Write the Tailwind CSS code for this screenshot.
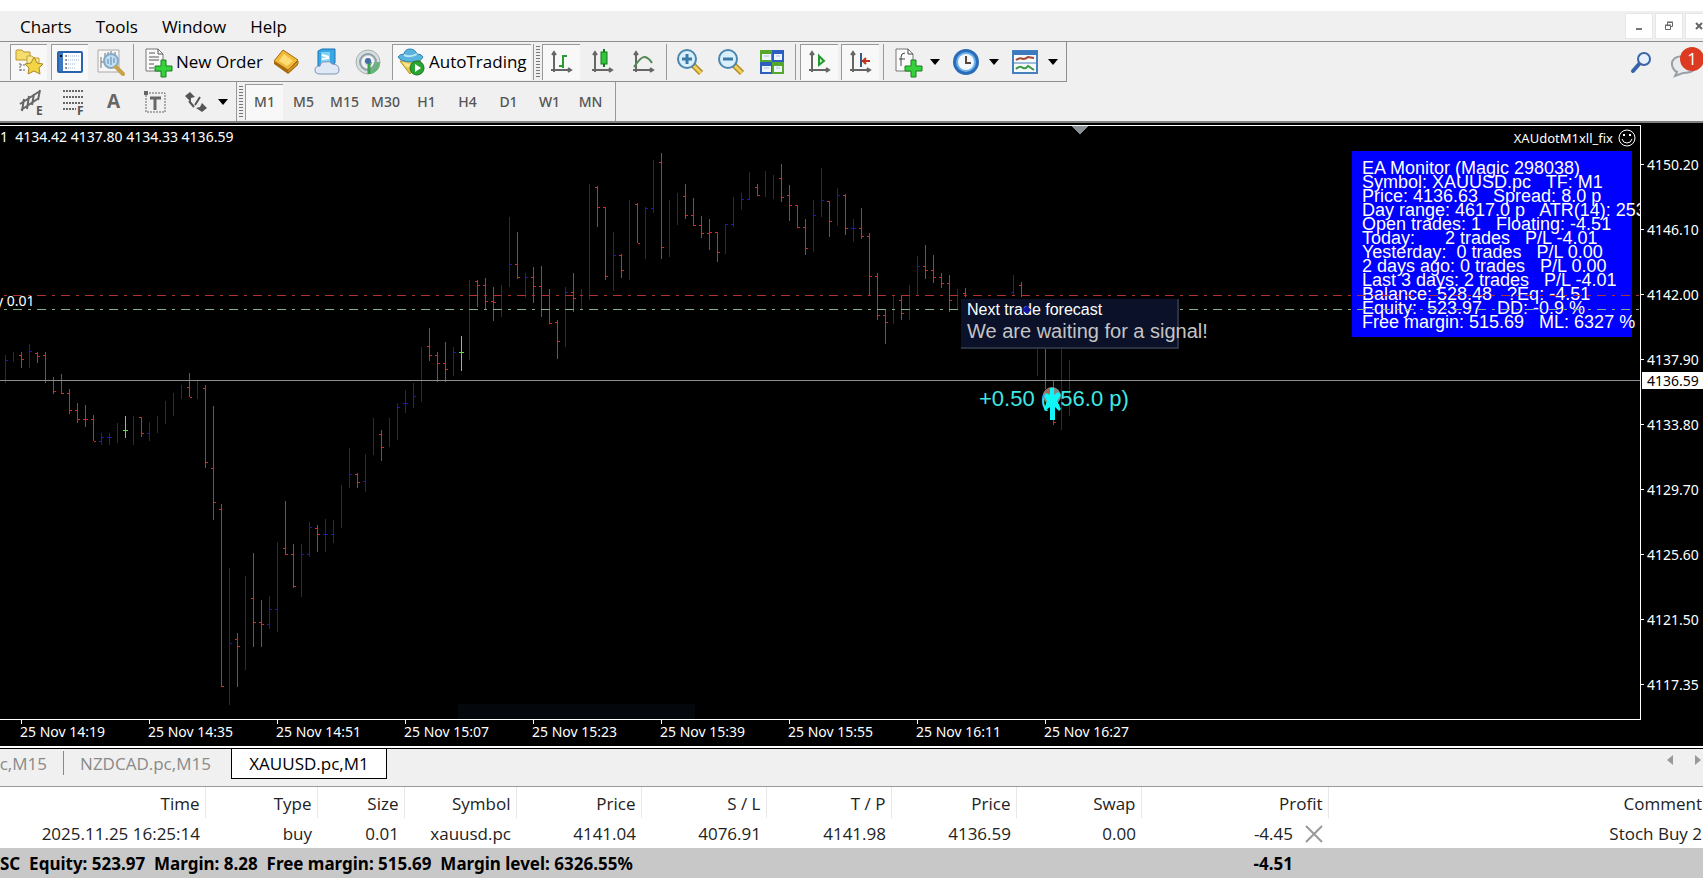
<!DOCTYPE html>
<html lang="en">
   <head>
      <meta charset="UTF-8" />
      <meta name="viewport" content="width=device-width, initial-scale=1.0" />
      <script src="https://cdn.jsdelivr.net/npm/@tailwindcss/browser@4"></script>
      <title>XAUUSD.pc,M1</title>
   </head>

   <body
      class="h-screen flex flex-col overflow-hidden bg-white text-black pt-[11px] pb-3 text-[17px] font-['Open_Sans',sans-serif]"
   >
      <!-- Menu bar -->
      <header
         class="h-[31px] shrink-0 flex items-center justify-between bg-[#f0f0f0] border-b border-[#8c8f8f]"
      >
         <nav class="flex items-center gap-6 pl-5 pt-[2px] leading-6">
            <a href="#">Charts</a>
            <a href="#">Tools</a>
            <a href="#">Window</a>
            <a href="#">Help</a>
         </nav>
         <div class="flex h-[26px] gap-[2px] text-gray-600">
            <button aria-label="Minimize" class="w-7 bg-white border border-gray-200 flex items-center justify-center">
               <svg class="size-3" viewBox="0 0 12 12"><path d="M3 9h6" stroke="#777" stroke-width="2" /></svg>
            </button>
            <button aria-label="Restore" class="w-7 bg-white border border-gray-200 flex items-center justify-center">
               <svg class="size-3" viewBox="0 0 12 12" fill="none" stroke="#666"><path d="M2.500 5.500h5v4h-5zM4.500 5V2.500h5v4H8M2 5h6M4 2h6" /></svg>
            </button>
            <button aria-label="Close" class="w-[18px] bg-white border border-r-0 border-gray-200 flex items-center justify-end overflow-hidden">
               <svg class="size-2 shrink-0" viewBox="0 0 8 8"><path d="M1 1l6 6M7 1l-6 6" stroke="#666" stroke-width="2" /></svg>
            </button>
         </div>
      </header>

      <!-- Main toolbar -->
      <div class="h-10 shrink-0 flex items-center justify-between bg-[#f0f0f0]">
         <div class="h-full flex items-center pl-[10px] border-r border-b border-[#8c8f8f] pr-2">
            <div class="flex items-center gap-1">
               <button aria-label="Favorites" class="w-[37px] h-9 flex items-center justify-center bg-[#f8f8f8] border-l border-t border-[#999]">
                  <svg class="size-7" viewBox="0 0 28 28">
                     <path d="M1 3q0-1 1-1h5l2 2h6v8H1z" fill="#f6dc6c" stroke="#b8962c" />
                     <path d="M5 15v9M5 17h6M5 22h6" stroke="#666" stroke-dasharray="2 1" />
                     <path d="M12 8h5l2 2h5v7H12z" fill="#fae98c" stroke="#c3a038" />
                     <path d="M19 9l3 6 6 1-4 4 1 6-6-3-6 3 1-6-4-4 6-1z" fill="#f3d443" stroke="#a88a2a" />
                  </svg>
               </button>
               <button aria-label="Terminal" class="w-[37px] h-9 flex items-center justify-center bg-[#f8f8f8] border-l border-t border-[#999]">
                  <svg class="size-7" viewBox="0 0 28 28">
                     <rect x="2" y="4" width="24" height="20" rx="1" fill="#fff" stroke="#2b64ae" stroke-width="2" />
                     <path d="M3 5h4v18H3z" fill="#3c78c4" />
                     <path d="M5 7v2" stroke="#111" stroke-width="2" />
                     <path d="M10 8h14M10 12h14M10 16h10M10 20h10" stroke="#9db4d8" stroke-dasharray="1 1" />
                     <path d="M9 8h2M9 12h2M9 16h2M9 20h2" stroke="#444" stroke-width="1" />
                  </svg>
               </button>
               <button aria-label="Strategy tester" class="w-[37px] h-9 flex items-center justify-center">
                  <svg class="size-7" viewBox="0 0 28 28">
                     <path d="M1 2h21v22H1z" fill="#f6f6f6" stroke="#aaa" />
                     <path d="M4 20V9M4 14h3M8 17V5M11 8V4M14 9V3M18 8V4" stroke="#777" />
                     <circle cx="14" cy="13" r="7" fill="#b9dcf3" fill-opacity=".85" stroke="#86a9c6" stroke-width="2" />
                     <path d="M11 16v-5M14 17v-8M17 15v-5" stroke="#5b87b0" />
                     <path d="M19 19l7 7" stroke="#c8a24a" stroke-width="4" stroke-linecap="round" />
                  </svg>
               </button>
            </div>
            <div class="w-px h-9 mx-1 bg-[#999]"></div>
            <button class="h-9 flex items-center gap-[2px] px-1">
               <svg class="size-8" viewBox="0 0 32 32">
                  <path d="M4 3h12l5 5v17H4z" fill="#fafafa" stroke="#777" />
                  <path d="M16 3v5h5M7 7h6M7 11h10M7 14h10M7 18h5M7 22h5" fill="none" stroke="#555" />
                  <path d="M19 14h5v6h6v5h-6v6h-5v-6h-6v-5h6z" fill="#35d13a" stroke="#16801c" />
               </svg>
               New Order
            </button>
            <div class="flex items-center gap-1">
               <button aria-label="MetaEditor" class="w-[37px] h-9 flex items-center justify-center">
                  <svg class="size-7" viewBox="0 0 28 28">
                     <path d="M2 13L11 2l15 10v5L16 26 2 16z" fill="#a86a10" />
                     <path d="M2 13L11 2l15 10-10 10z" fill="#f0b93a" stroke="#a96f14" />
                     <path d="M7 13l5-7 9 7-6 5z" fill="#ffdc74" />
                     <path d="M16 22l10-9v3l-10 9z" fill="#d99a2a" stroke="#a96f14" />
                  </svg>
               </button>
               <button aria-label="Virtual hosting" class="w-[37px] h-9 flex items-center justify-center">
                  <svg class="size-7" viewBox="0 0 28 28">
                     <path d="M5 3l4-2h13v14l-4 3H5z" fill="#3aa7e4" stroke="#1b75b8" />
                     <path d="M8 4h9v12H8z" fill="#7fd2fa" />
                     <path d="M9 7l7 2M9 11l7-1" stroke="#fff" stroke-width="2" />
                     <path d="M7 26q-5 0-5-4t5-4q1-5 6-4 3-2 6 2 7 0 7 6 0 4-5 4z" fill="#dfe8f5" stroke="#7f93b5" />
                  </svg>
               </button>
               <button aria-label="Signals" class="w-[37px] h-9 flex items-center justify-center">
                  <svg class="size-7" viewBox="0 0 28 28" fill="none">
                     <circle cx="14" cy="14" r="12" fill="#d8dedd" stroke="#a5b1b3" />
                     <path d="M14 14L26 14q0 10-10 12h-2z" fill="#62b871" />
                     <circle cx="14" cy="14" r="8" stroke="#8da0aa" stroke-width="2" />
                     <circle cx="14" cy="14" r="5" stroke="#f5f7f8" stroke-width="2" />
                     <circle cx="14" cy="13" r="3" fill="#3f6ca6" />
                     <path d="M15 16v10" stroke="#3fa14f" stroke-width="3" />
                  </svg>
               </button>
            </div>
            <button class="h-9 ml-[6px] pl-1 pr-1 flex items-center gap-1 bg-[#f8f8f8] border-l border-t border-[#999]">
               <svg class="size-7" viewBox="0 0 28 28">
                  <path d="M3 13h21L13 26z" fill="#ecc94e" stroke="#b18f26" />
                  <path d="M5 13q8 6 18 0l-2 5q-7 3-13 0z" fill="#fae68d" />
                  <path d="M1 9q2-3 6-3 1-5 6-5t7 5q5 0 6 3-2 5-12 5T1 9z" fill="#58b4dc" stroke="#2f86b4" />
                  <path d="M7 7q6 3 13-1" fill="none" stroke="#b7e5f7" stroke-width="2" />
                  <circle cx="20" cy="20" r="7" fill="#28a532" stroke="#15771d" />
                  <path d="M18 16l6 4-6 4z" fill="#fff" />
               </svg>
               AutoTrading
            </button>
            <div class="w-px h-9 mx-[2px] bg-[#999]"></div>
            <svg class="w-1 h-8 mr-[2px]"><path d="M2 0v32" stroke="#777" stroke-width="4" stroke-dasharray="1 2" /></svg>
            <div class="flex items-center gap-[3px]">
               <button aria-label="Bar chart" class="w-[38px] h-9 flex items-center justify-center bg-[#f8f8f8] border-l border-t border-[#999]">
                  <svg class="size-6" viewBox="0 0 24 24" fill="none" stroke="#666" stroke-width="2">
                     <path d="M5 3v19M2 20h19M3 5l2-3 2 3M19 18l3 2-3 2" />
                     <path d="M14 5v13M14 6h4M10 16h4" stroke="#2a9a34" />
                  </svg>
               </button>
               <button aria-label="Candlesticks" class="w-[38px] h-9 flex items-center justify-center">
                  <svg class="size-6 overflow-visible" viewBox="0 0 24 24" fill="none" stroke="#666" stroke-width="2">
                     <path d="M5 3v19M2 20h19M3 5l2-3 2 3M19 18l3 2-3 2" />
                     <path d="M14-1v18" stroke="#137a1d" />
                     <rect x="11" y="2" width="6" height="12" fill="#31c43c" stroke="#137a1d" stroke-width="1" />
                  </svg>
               </button>
               <button aria-label="Line chart" class="w-[38px] h-9 flex items-center justify-center">
                  <svg class="size-6" viewBox="0 0 24 24" fill="none" stroke="#666" stroke-width="2">
                     <path d="M5 3v19M2 20h19M3 5l2-3 2 3M19 18l3 2-3 2" />
                     <path d="M3 17q7-11 11-10 4 1 7 6" stroke="#54895a" />
                  </svg>
               </button>
            </div>
            <div class="w-px h-9 mx-1 bg-[#999]"></div>
            <div class="flex items-center gap-[3px]">
               <button aria-label="Zoom in" class="w-[38px] h-9 flex items-center justify-center">
                  <svg class="size-7" viewBox="0 0 28 28">
                     <path d="M17 17l8 8" stroke="#b08a28" stroke-width="6" />
                     <path d="M17 17l8 8" stroke="#f0d05c" stroke-width="3" />
                     <circle cx="11" cy="11" r="9" fill="#d9effb" stroke="#4a86ad" stroke-width="2" />
                     <path d="M6 11h10M11 6v10" stroke="#3b7ba8" stroke-width="3" />
                  </svg>
               </button>
               <button aria-label="Zoom out" class="w-[38px] h-9 flex items-center justify-center">
                  <svg class="size-7" viewBox="0 0 28 28">
                     <path d="M17 17l8 8" stroke="#b08a28" stroke-width="6" />
                     <path d="M17 17l8 8" stroke="#f0d05c" stroke-width="3" />
                     <circle cx="11" cy="11" r="9" fill="#d9effb" stroke="#4a86ad" stroke-width="2" />
                     <path d="M6 11h10" stroke="#3b7ba8" stroke-width="3" />
                  </svg>
               </button>
               <button aria-label="Tile windows" class="w-[38px] h-9 flex items-center justify-center">
                  <svg class="size-7" viewBox="0 0 28 28">
                     <path d="M2 2h12v12H2zM14 14h12v12H14z" fill="#56a82d" />
                     <path d="M14 2h12v12H14zM2 14h12v12H2z" fill="#2c5fc0" />
                     <path d="M4 6h9v6H4zM16 6h8v6h-8zM4 18h9v6H4zM16 18h8v6h-8z" fill="#eef4fb" />
                     <path d="M6 8h5M18 8h4M6 20h5M18 20h4" stroke="#a9c3dd" />
                  </svg>
               </button>
            </div>
            <div class="w-px h-9 mx-1 bg-[#999]"></div>
            <div class="flex items-center gap-[3px]">
               <button aria-label="Auto scroll" class="w-[38px] h-9 flex items-center justify-center bg-[#f8f8f8] border-l border-t border-[#999]">
                  <svg class="size-6" viewBox="0 0 24 24" fill="none" stroke="#666" stroke-width="2">
                     <path d="M5 3v19M2 20h19M3 5l2-3 2 3M19 18l3 2-3 2" />
                     <path d="M12 6l5 5-5 4z" fill="#c9f0cb" stroke="#239a2f" />
                  </svg>
               </button>
               <button aria-label="Chart shift" class="w-[38px] h-9 flex items-center justify-center bg-[#f8f8f8] border-l border-t border-[#999]">
                  <svg class="size-6" viewBox="0 0 24 24" fill="none" stroke="#666" stroke-width="2">
                     <path d="M5 3v19M2 20h19M3 5l2-3 2 3M19 18l3 2-3 2" />
                     <path d="M13 3v14" stroke="#2d5d85" />
                     <path d="M14 11h8M18 8l-3 3 3 3" stroke="#c0301c" />
                  </svg>
               </button>
            </div>
            <div class="w-px h-9 mx-1 bg-[#999]"></div>
            <div class="flex items-center gap-3 pl-1">
               <button aria-label="Indicators" class="h-9 flex items-center gap-[6px]">
                  <svg class="size-8" viewBox="0 0 32 32">
                     <path d="M4 3h12l5 5v17H4z" fill="#fafafa" stroke="#777" />
                     <path d="M16 3v5h5M13 7q-4 0-4 4v9M7 13h6" fill="none" stroke="#444" stroke-width="1" />
                     <path d="M19 14h5v6h6v5h-6v6h-5v-6h-6v-5h6z" fill="#35d13a" stroke="#16801c" />
                  </svg>
                  <svg class="w-[10px] h-[6px]" viewBox="0 0 10 6"><path d="M0 0h10L5 6z" /></svg>
               </button>
               <button aria-label="Periods" class="h-9 flex items-center gap-[9px]">
                  <svg class="size-7" viewBox="0 0 28 28">
                     <circle cx="14" cy="14" r="13" fill="#2a6cb8" />
                     <circle cx="14" cy="14" r="10" fill="#6db2ea" />
                     <circle cx="14" cy="14" r="8" fill="#f4f8fb" />
                     <path d="M14 8v7h5" fill="none" stroke="#5a4638" stroke-width="2" />
                  </svg>
                  <svg class="w-[10px] h-[6px]" viewBox="0 0 10 6"><path d="M0 0h10L5 6z" /></svg>
               </button>
               <button aria-label="Templates" class="h-9 flex items-center gap-[9px]">
                  <svg class="size-7" viewBox="0 0 28 28" fill="none">
                     <rect x="2" y="3" width="24" height="22" fill="#f6fafd" stroke="#4680bd" stroke-width="2" />
                     <path d="M2 5h24" stroke="#3c7ac0" stroke-width="4" />
                     <path d="M2 15h24" stroke="#4680bd" />
                     <path d="M5 12q4-3 7-1 3 0 5-2l6 1" stroke="#a5452c" stroke-width="2" />
                     <path d="M5 21q4-4 7-1 3 1 5-2l6 4" stroke="#3c9a45" stroke-width="2" />
                  </svg>
                  <svg class="w-[10px] h-[6px]" viewBox="0 0 10 6"><path d="M0 0h10L5 6z" /></svg>
               </button>
            </div>
         </div>
         <div class="flex items-center gap-4">
            <button aria-label="Search">
               <svg class="size-6" viewBox="0 0 24 24">
                  <path d="M11 13l-7 8" stroke="#3764a8" stroke-width="4" stroke-linecap="round" />
                  <circle cx="15" cy="9" r="6" fill="#e6f0fa" stroke="#3c62a8" stroke-width="2" />
               </svg>
            </button>
            <button aria-label="Notifications">
               <svg class="w-[34px] h-9" viewBox="0 0 34 36">
                  <path d="M14 12q-12 1-11 9 1 5 5 7l-2 4 8-3q8 0 12-4" fill="#e8eaee" stroke="#9aa0a8" stroke-width="2" />
                  <circle cx="23" cy="15" r="12" fill="#dd3a22" />
                  <text x="23" y="21" text-anchor="middle" font-size="17" fill="#fff">1</text>
               </svg>
            </button>
         </div>
      </div>

      <!-- Line studies and timeframes -->
      <div class="h-[41px] shrink-0 flex items-center bg-[#f0f0f0] border-b-2 border-[#808080]">
         <div class="h-full flex items-center pl-3 border-r border-[#999]">
            <button aria-label="Equidistant channel" class="w-10 h-9 flex items-center justify-center">
               <svg class="size-7 overflow-visible" viewBox="0 0 28 28" stroke="#666" stroke-width="2" fill="none">
                  <path d="M2 16L22 3M3 22L21 10M6 11l-2 12M11 8l-2 13M16 6l-2 11M22 2l-2 10" />
                  <text x="18" y="27" font-size="12" font-weight="700" fill="#555" stroke="none">E</text>
               </svg>
            </button>
            <button aria-label="Fibonacci retracement" class="w-[41px] h-9 flex items-center justify-center">
               <svg class="size-7 overflow-visible" viewBox="0 0 28 28" stroke="#666" stroke-width="2" fill="none">
                  <path d="M4 3h21M4 9h21M4 15h21M4 21h13" stroke-dasharray="2 1" />
                  <text x="18" y="27" font-size="12" font-weight="700" fill="#555" stroke="none">F</text>
               </svg>
            </button>
            <button class="w-[41px] h-9 text-[19px] font-bold text-[#666]">A</button>
            <button aria-label="Text label" class="w-[41px] h-9 flex items-center justify-center">
               <svg class="size-7" viewBox="0 0 28 28" stroke="#666" fill="none">
                  <rect x="5" y="5" width="19" height="19" stroke-dasharray="2 1" />
                  <path d="M3 3h4v4H3z" fill="#666" stroke="none" />
                  <path d="M9 10h11M14 10v12" stroke-width="3" />
               </svg>
            </button>
            <button aria-label="Arrows" class="w-[61px] h-9 flex items-center justify-center gap-[10px]">
               <svg class="size-6" viewBox="0 0 24 24" fill="#555">
                  <path d="M6 2l5 5-4 1v4L1 6zM18 13l5 5-5 4-6-4 4-1z" />
                  <path d="M5 11l5 6M11 15l5-8" stroke="#555" stroke-width="2" />
               </svg>
               <svg class="w-[10px] h-[6px]" viewBox="0 0 10 6"><path d="M0 0h10L5 6z" fill="#000" /></svg>
            </button>
         </div>
         <svg class="w-1 h-8 mx-[2px]"><path d="M2 0v32" stroke="#777" stroke-width="4" stroke-dasharray="1 2" /></svg>
         <div class="h-full flex items-center pr-1 border-r border-[#999] text-sm font-medium text-[#555] font-['Noto_Sans',sans-serif]">
            <button class="w-[38px] h-9 bg-[#f8f8f8] border-l border-t border-[#999]">M1</button>
            <button class="w-[41px] h-9">M5</button>
            <button class="w-[41px] h-9">M15</button>
            <button class="w-[41px] h-9">M30</button>
            <button class="w-[41px] h-9">H1</button>
            <button class="w-[41px] h-9">H4</button>
            <button class="w-[41px] h-9">D1</button>
            <button class="w-[41px] h-9">W1</button>
            <button class="w-[41px] h-9">MN</button>
         </div>
      </div>

      <!-- Chart -->
      <main class="flex-1 min-h-0 flex flex-col bg-black pt-[2px] text-white text-sm font-['Noto_Sans',sans-serif]">
         <div class="flex-1 min-h-0 flex">
            <div class="relative flex-1 min-w-0 overflow-hidden border-t border-r border-b border-white">
               <svg class="absolute inset-0 size-full">
                  <rect x="458" y="578" width="237" height="16" fill="#04080c" />
                  <g id="bars" fill="none"></g>
               </svg>

               <!-- EA monitor panel -->
               <div class="absolute top-[25px] right-2 w-[280px] h-[186px] flex flex-col pt-[10px] pl-[10px] bg-[#0000fe] text-lg leading-[14px] whitespace-pre font-['Liberation_Sans',sans-serif]">
                  <p>EA Monitor (Magic 298038)</p>
                  <p>Symbol: XAUUSD.pc   TF: M1</p>
                  <p>Price: 4136.63   Spread: 8.0 p</p>
                  <p>Day range: 4617.0 p   ATR(14): 253</p>
                  <p>Open trades: 1   Floating: -4.51</p>
                  <p>Today:      2 trades   P/L -4.01</p>
                  <p>Yesterday:  0 trades   P/L 0.00</p>
                  <p>2 days ago: 0 trades   P/L 0.00</p>
                  <p>Last 3 days: 2 trades   P/L -4.01</p>
                  <p>Balance: 528.48   ?Eq: -4.51</p>
                  <p>Equity:  523.97   DD: -0.9 %</p>
                  <p>Free margin: 515.69   ML: 6327 %</p>
               </div>

               <!-- Price level lines -->
               <svg class="absolute inset-0 size-full" shape-rendering="crispEdges">
                  <line x1="-11" y1="169.500" x2="100%" y2="169.500" stroke="#b03232" stroke-dasharray="9 6 3 6" />
                  <line x1="-11" y1="183.500" x2="100%" y2="183.500" stroke="#84b08c" stroke-dasharray="9 6 3 6" />
                  <line x1="0" y1="254.500" x2="100%" y2="254.500" stroke="#8c8f94" />
                  <path d="M1071 0h17l-8 9z" fill="#8a8f96" />
               </svg>

               <p class="absolute top-px left-0 leading-5 whitespace-pre">1  4134.42 4137.80 4134.33 4136.59</p>
               <p class="absolute top-[165px] left-[-4px] leading-5">y 0.01</p>
               <div class="absolute top-[2px] right-1 flex items-center gap-[5px] text-[13px] leading-5">
                  XAUdotM1xll_fix
                  <svg class="size-[18px]" viewBox="0 0 18 18" fill="none" stroke="#fff">
                     <circle cx="9" cy="9" r="8" />
                     <path d="M4 10q1 4 5 4t5-4" />
                     <path d="M6 5v2M12 5v2" stroke-width="2" />
                  </svg>
               </div>

               <!-- Open trade result -->
               <p class="absolute top-[261px] left-[979px] leading-6 text-[22px] text-[#3fe8e4] whitespace-nowrap font-['Liberation_Sans',sans-serif]">+0.50 (156.0 p)</p>
               <svg class="absolute top-[260px] left-[1040px] w-6 h-9" viewBox="0 0 24 36">
                  <circle cx="12" cy="10" r="9" fill="#7d8a88" />
                  <path d="M5 5l4-3 2 3-4 4z" fill="#b0664c" />
                  <path d="M10 2h4v7l4-3 3 3-4 6 4 8-2 2-4-4v13h-5V21l-5 4-1-2 3-8-3-5 2-3 4 2z" fill="#0ff6f6" />
               </svg>

               <!-- Forecast -->
               <div class="absolute top-[173px] left-[961px] w-[218px] h-[50px] pl-[6px] pt-[1px] bg-[#0a1128] border-b-2 border-r-2 border-[#2b3243] whitespace-nowrap font-['Liberation_Sans',sans-serif]">
                  <p class="text-base leading-5">Next trade forecast</p>
                  <p class="text-xl leading-[22px] text-[#c4c4c4]">We are waiting for a signal!</p>
               </div>
               <svg class="absolute top-[179px] left-[1022px] size-[9px]" viewBox="0 0 9 9"><path d="M5 0l4 5-4 4-5-4z" fill="#1414a8" /></svg>
            </div>

            <!-- Price scale -->
            <div class="relative w-[62px] pt-[7px]">
               <div class="h-[65px] flex items-center gap-[3px]"><i class="w-[3px] h-px bg-white"></i>4150.20</div>
               <div class="h-[65px] flex items-center gap-[3px]"><i class="w-[3px] h-px bg-white"></i>4146.10</div>
               <div class="h-[65px] flex items-center gap-[3px]"><i class="w-[3px] h-px bg-white"></i>4142.00</div>
               <div class="h-[65px] flex items-center gap-[3px]"><i class="w-[3px] h-px bg-white"></i>4137.90</div>
               <div class="h-[65px] flex items-center gap-[3px]"><i class="w-[3px] h-px bg-white"></i>4133.80</div>
               <div class="h-[65px] flex items-center gap-[3px]"><i class="w-[3px] h-px bg-white"></i>4129.70</div>
               <div class="h-[65px] flex items-center gap-[3px]"><i class="w-[3px] h-px bg-white"></i>4125.60</div>
               <div class="h-[65px] flex items-center gap-[3px]"><i class="w-[3px] h-px bg-white"></i>4121.50</div>
               <div class="h-[65px] flex items-center gap-[3px]"><i class="w-[3px] h-px bg-white"></i>4117.35</div>
               <div class="absolute top-[247px] left-px right-0 h-[17px] pl-[5px] bg-white text-black leading-[17px]">4136.59</div>
            </div>
         </div>

         <!-- Time scale -->
         <div class="h-[26px] flex pl-[21px]">
            <div class="w-32 h-1 border-l border-white whitespace-nowrap leading-6 -indent-[2px]">25 Nov 14:19</div>
            <div class="w-32 h-1 border-l border-white whitespace-nowrap leading-6 -indent-[2px]">25 Nov 14:35</div>
            <div class="w-32 h-1 border-l border-white whitespace-nowrap leading-6 -indent-[2px]">25 Nov 14:51</div>
            <div class="w-32 h-1 border-l border-white whitespace-nowrap leading-6 -indent-[2px]">25 Nov 15:07</div>
            <div class="w-32 h-1 border-l border-white whitespace-nowrap leading-6 -indent-[2px]">25 Nov 15:23</div>
            <div class="w-32 h-1 border-l border-white whitespace-nowrap leading-6 -indent-[2px]">25 Nov 15:39</div>
            <div class="w-32 h-1 border-l border-white whitespace-nowrap leading-6 -indent-[2px]">25 Nov 15:55</div>
            <div class="w-32 h-1 border-l border-white whitespace-nowrap leading-6 -indent-[2px]">25 Nov 16:11</div>
            <div class="w-32 h-1 border-l border-white whitespace-nowrap leading-6 -indent-[2px]">25 Nov 16:27</div>
         </div>
      </main>

      <!-- Chart tabs -->
      <div class="shrink-0 mt-[2px] h-[39px] flex items-start justify-between bg-[#f0f0f0] border-t border-b border-t-black border-b-[#999]">
         <div class="flex text-[#8a8a8a]">
            <button class="h-[30px] w-[63px] flex items-center justify-end pr-4">c,M15</button>
            <div class="w-px h-6 mt-[2px] bg-[#888]"></div>
            <button class="h-[30px] w-[167px] text-center pr-1">NZDCAD.pc,M15</button>
            <button class="h-[30px] w-[156px] bg-white text-black border-x border-b border-black">XAUUSD.pc,M1</button>
         </div>
         <div class="flex gap-[22px] pt-[6px] pr-[2px]">
            <button aria-label="Previous"><svg class="w-[6px] h-[10px]" viewBox="0 0 6 10"><path d="M6 0v10L0 5z" fill="#999" /></svg></button>
            <button aria-label="Next"><svg class="w-[6px] h-[10px]" viewBox="0 0 6 10"><path d="M0 0v10l6-5z" fill="#999" /></svg></button>
         </div>
      </div>

      <!-- Trades -->
      <table class="shrink-0 w-full table-fixed text-right whitespace-nowrap leading-7 text-[#222]">
         <colgroup>
            <col class="w-[205px]" />
            <col class="w-[112px]" />
            <col class="w-[87px]" />
            <col class="w-[112px]" />
            <col class="w-[125px]" />
            <col class="w-[125px]" />
            <col class="w-[125px]" />
            <col class="w-[125px]" />
            <col class="w-[125px]" />
            <col class="w-[187px]" />
            <col />
         </colgroup>
         <thead>
            <tr class="h-[31px]">
               <th class="font-normal p-0 pt-[2px] pr-[5px] border-r border-[#e8e8e8]">Time</th>
               <th class="font-normal p-0 pt-[2px] pr-[5px] border-r border-[#e8e8e8]">Type</th>
               <th class="font-normal p-0 pt-[2px] pr-[5px] border-r border-[#e8e8e8]">Size</th>
               <th class="font-normal p-0 pt-[2px] pr-[5px] border-r border-[#e8e8e8]">Symbol</th>
               <th class="font-normal p-0 pt-[2px] pr-[5px] border-r border-[#e8e8e8]">Price</th>
               <th class="font-normal p-0 pt-[2px] pr-[5px] border-r border-[#e8e8e8]">S / L</th>
               <th class="font-normal p-0 pt-[2px] pr-[5px] border-r border-[#e8e8e8]">T / P</th>
               <th class="font-normal p-0 pt-[2px] pr-[5px] border-r border-[#e8e8e8]">Price</th>
               <th class="font-normal p-0 pt-[2px] pr-[5px] border-r border-[#e8e8e8]">Swap</th>
               <th class="font-normal p-0 pt-[2px] pr-[5px] border-r border-[#e8e8e8]">Profit</th>
               <th class="font-normal p-0 pt-[2px] pr-px">Comment</th>
            </tr>
         </thead>
         <tbody>
            <tr>
               <td class="p-0 pt-[2px] pr-[5px]">2025.11.25 16:25:14</td>
               <td class="p-0 pt-[2px] pr-[5px]">buy</td>
               <td class="p-0 pt-[2px] pr-[5px]">0.01</td>
               <td class="p-0 pt-[2px] pr-[5px]">xauusd.pc</td>
               <td class="p-0 pt-[2px] pr-[5px]">4141.04</td>
               <td class="p-0 pt-[2px] pr-[5px]">4076.91</td>
               <td class="p-0 pt-[2px] pr-[5px]">4141.98</td>
               <td class="p-0 pt-[2px] pr-[5px]">4136.59</td>
               <td class="p-0 pt-[2px] pr-[5px]">0.00</td>
               <td class="p-0 pt-[2px] pr-[5px]">
                  <div class="flex items-center justify-end gap-3">
                     -4.45
                     <button aria-label="Close position">
                        <svg class="size-[18px]" viewBox="0 0 18 18"><path d="M1 1l16 16M17 1L1 17" stroke="#999" stroke-width="2" /></svg>
                     </button>
                  </div>
               </td>
               <td class="p-0 pt-[2px] pr-px">Stoch Buy 2</td>
            </tr>
         </tbody>
         <tfoot>
            <tr class="bg-[#c8c8c8] font-bold text-black font-['Noto_Sans',sans-serif]">
               <td colspan="9" class="p-0 pt-[2px] text-left whitespace-pre">SC  Equity: 523.97  Margin: 8.28  Free margin: 515.69  Margin level: 6326.55%</td>
               <td class="p-0 pt-[2px] pr-[35px]">-4.51</td>
               <td class="p-0"></td>
            </tr>
         </tfoot>
      </table>

      <script>
         // slot, colour, high, low, open, close (0 = no tick)
         const bars = [
            [0, "b", 355, 383, 0, 360], [1, "b", 352, 362, 0, 0], [2, "r", 352, 368, 355, 359],
            [3, "b", 344, 368, 0, 351], [4, "r", 352, 363, 353, 356], [5, "r", 352, 383, 355, 380],
            [6, "r", 377, 394, 380, 391], [7, "r", 374, 394, 380, 393], [8, "r", 389, 414, 393, 410],
            [9, "r", 403, 423, 410, 419], [10, "r", 405, 427, 419, 419], [11, "r", 415, 441, 419, 441],
            [12, "b", 433, 445, 441, 437], [13, "b", 433, 445, 437, 437], [14, "b", 423, 443, 0, 0],
            [15, "g", 416, 438, 430, 430], [16, "b", 416, 445, 0, 0], [17, "r", 417, 437, 417, 433],
            [18, "b", 422, 441, 433, 0], [19, "b", 416, 433, 0, 0], [20, "b", 401, 424, 0, 0],
            [21, "b", 393, 416, 0, 0], [22, "b", 385, 399, 0, 0], [23, "r", 373, 397, 387, 397],
            [24, "b", 381, 399, 0, 0], [25, "r", 385, 468, 388, 462], [26, "r", 406, 520, 468, 502],
            [27, "r", 504, 687, 509, 686], [28, "b", 568, 705, 0, 643], [29, "r", 633, 687, 639, 646],
            [30, "b", 576, 670, 0, 0], [31, "r", 553, 647, 598, 622], [32, "r", 600, 647, 622, 624],
            [33, "b", 596, 629, 624, 609], [34, "b", 542, 632, 609, 0], [35, "r", 501, 555, 548, 554],
            [36, "r", 544, 588, 554, 586], [37, "b", 544, 597, 0, 554], [38, "b", 522, 557, 554, 527],
            [39, "r", 525, 552, 528, 534], [40, "b", 519, 552, 534, 534], [41, "b", 520, 543, 534, 0],
            [42, "b", 485, 528, 0, 0], [43, "b", 448, 488, 0, 474], [44, "r", 473, 488, 474, 482],
            [45, "b", 454, 492, 481, 0], [46, "b", 418, 455, 0, 0], [47, "r", 430, 461, 434, 447],
            [48, "b", 418, 447, 0, 0], [49, "b", 403, 440, 0, 407], [50, "b", 390, 413, 403, 403],
            [51, "b", 383, 408, 0, 396], [52, "b", 347, 402, 0, 0], [53, "r", 328, 361, 346, 355],
            [54, "r", 352, 382, 355, 363], [55, "r", 342, 382, 363, 369], [56, "b", 347, 376, 0, 352],
            [57, "g", 336, 371, 352, 352], [58, "b", 280, 360, 0, 0], [59, "r", 280, 307, 281, 285],
            [60, "r", 278, 309, 285, 301], [61, "r", 287, 321, 301, 302], [62, "b", 285, 317, 0, 0],
            [63, "b", 217, 287, 0, 264], [64, "r", 232, 279, 264, 277], [65, "b", 273, 298, 0, 277],
            [66, "r", 267, 303, 277, 286], [67, "r", 266, 317, 286, 295], [68, "r", 289, 324, 295, 323],
            [69, "r", 320, 359, 322, 341], [70, "b", 287, 347, 0, 292], [71, "r", 273, 312, 292, 298],
            [72, "b", 289, 309, 0, 0], [73, "b", 184, 300, 0, 0], [74, "r", 186, 227, 187, 207],
            [75, "r", 207, 280, 207, 276], [76, "b", 232, 291, 0, 255], [77, "r", 254, 278, 255, 270],
            [78, "b", 200, 280, 0, 0], [79, "r", 203, 243, 204, 243], [80, "b", 207, 259, 0, 208],
            [81, "b", 160, 213, 208, 0], [82, "r", 153, 259, 162, 247], [83, "b", 200, 257, 0, 0],
            [84, "b", 193, 225, 0, 0], [85, "r", 184, 219, 196, 215], [86, "r", 198, 226, 215, 225],
            [87, "r", 216, 238, 225, 233], [88, "r", 219, 250, 233, 232], [89, "r", 232, 262, 232, 252],
            [90, "b", 224, 254, 0, 224], [91, "b", 197, 227, 224, 0], [92, "b", 193, 210, 0, 199],
            [93, "b", 172, 200, 199, 0], [94, "r", 184, 196, 187, 195], [95, "b", 171, 197, 0, 0],
            [96, "b", 175, 199, 0, 0], [97, "r", 164, 202, 178, 197], [98, "r", 185, 221, 195, 205],
            [99, "r", 205, 228, 205, 227], [100, "r", 219, 255, 227, 248], [101, "b", 200, 252, 0, 215],
            [102, "b", 168, 217, 0, 200], [103, "r", 201, 237, 201, 221], [104, "b", 188, 226, 0, 195],
            [105, "r", 194, 235, 195, 228], [106, "b", 219, 242, 228, 228], [107, "r", 208, 239, 228, 236],
            [108, "r", 233, 296, 236, 276], [109, "r", 273, 320, 276, 315], [110, "r", 310, 344, 315, 322],
            [111, "b", 295, 324, 0, 0], [112, "r", 295, 320, 300, 313], [113, "b", 285, 320, 0, 0],
            [114, "b", 256, 295, 0, 266], [115, "r", 245, 279, 266, 270], [116, "r", 255, 283, 270, 277],
            [117, "r", 273, 288, 277, 283], [118, "r", 275, 312, 283, 300], [119, "b", 289, 310, 0, 0],
            [120, "r", 288, 297, 293, 0], [126, "b", 275, 295, 292, 0], [127, "r", 282, 297, 285, 0],
            [129, "b", 349, 376, 0, 0], [130, "r", 349, 389, 0, 0], [131, "r", 380, 425, 0, 422],
            [132, "b", 349, 430, 0, 0], [133, "b", 360, 416, 380, 0],
         ];
         const colors = { r: "#d42a26", b: "#1a1ab8", g: "#5fe04a" };
         const paths = { r: "", b: "", g: "" };
         const top0 = 126;

         for (const [slot, color, high, low, open, close] of bars) {
            const x = slot * 8 + 5;
            let d = `M${x + 0.5} ${high - top0}V${low - top0}`;
            if (open) d += `M${x - 2} ${open - top0 + 0.5}h2`;
            if (close) d += `M${x + 1} ${close - top0 + 0.5}h2`;
            paths[color] += d;
         }
         document.getElementById("bars").innerHTML = Object.keys(paths)
            .map((c) => `<path d="${paths[c]}" stroke="${colors[c]}" />`)
            .join("");
      </script>
   </body>
</html>
